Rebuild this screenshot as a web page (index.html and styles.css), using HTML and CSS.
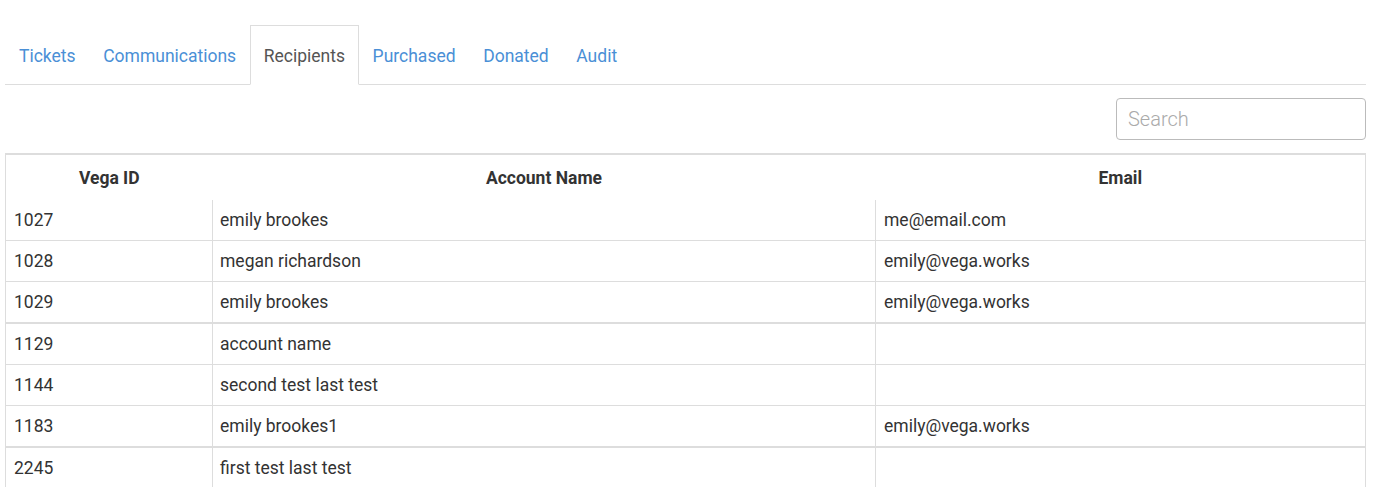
FILE: index.html
```html
<!DOCTYPE html>
<html>
<head>
<meta charset="utf-8">
<link rel="stylesheet" href="styles.css">
</head>
<body>
<div class="page">
  <ul class="tabs">
    <li class="tab"><a href="#">Tickets</a></li>
    <li class="tab"><a href="#">Communications</a></li>
    <li class="tab active"><a href="#">Recipients</a></li>
    <li class="tab"><a href="#">Purchased</a></li>
    <li class="tab"><a href="#">Donated</a></li>
    <li class="tab"><a href="#">Audit</a></li>
  </ul>
  <div class="toolbar">
    <input class="search" type="text" placeholder="Search">
  </div>
  <table class="grid">
    <colgroup>
      <col class="c-id"><col class="c-name"><col class="c-email">
    </colgroup>
    <thead>
      <tr><th>Vega ID</th><th>Account Name</th><th>Email</th></tr>
    </thead>
    <tbody>
      <tr><td>1027</td><td>emily brookes</td><td>me@email.com</td></tr>
      <tr><td>1028</td><td>megan richardson</td><td>emily@vega.works</td></tr>
      <tr><td>1029</td><td>emily brookes</td><td>emily@vega.works</td></tr>
    </tbody>
    <tbody>
      <tr><td>1129</td><td>account name</td><td></td></tr>
      <tr><td>1144</td><td>second test last test</td><td></td></tr>
      <tr><td>1183</td><td>emily brookes1</td><td>emily@vega.works</td></tr>
    </tbody>
    <tbody>
      <tr><td>2245</td><td>first test last test</td><td></td></tr>
    </tbody>
  </table>
</div>
</body>
</html>
```
FILE: styles.css
```css
html, body {
  margin: 0;
  padding: 0;
  background: #fff;
}
body {
  font-family: Roboto, "Liberation Sans", sans-serif;
  color: #333;
  font-size: 17.5px;
}
.page {
  padding: 25px 10px 0 5px;
}
.tabs {
  list-style: none;
  margin: 0;
  padding: 0;
  display: flex;
  border-bottom: 1px solid #ddd;
}
.tab {
  margin-bottom: -1px;
}
.tab a {
  display: block;
  padding: 18px 12.8px 16px 12.8px;
  line-height: 24px;
  font-size: 17.5px;
  color: #4a8fd6;
  text-decoration: none;
  border: 1px solid transparent;
}
.tab:first-child a {
  padding-left: 13px;
}
.tab.active a {
  color: #555;
  border-color: #ddd;
  border-bottom-color: #fff;
  background: #fff;
}
.toolbar {
  display: flex;
  justify-content: flex-end;
  padding: 13px 0 13px;
}
.search {
  width: 250px;
  height: 42px;
  box-sizing: border-box;
  border: 1px solid #bbb;
  border-radius: 4px;
  padding: 0 11px;
  font-family: Roboto, "Liberation Sans", sans-serif;
  font-size: 20px;
  font-weight: 300;
  color: #555;
  outline: none;
}
.search::placeholder {
  color: #aaa;
}
.grid {
  width: 100%;
  border-collapse: collapse;
  border: 1px solid #ddd;
  border-top: 2px solid #ddd;
}
.c-id { width: 207px; }
.c-name { width: 663px; }
.grid th {
  font-weight: 700;
  font-size: 17.5px;
  text-align: center;
  padding: 13px 8px 12px;
  height: 20px;
  line-height: 20px;
}
.grid td {
  padding: 9px 8px;
  line-height: 22px;
  height: 22px;
  border-top: 1px solid #ddd;
  border-left: 1px solid #ddd;
  text-align: left;
}
.grid td + td {
  padding-left: 7px;
}
.grid td:last-child {
  padding-left: 8px;
}
.grid tbody + tbody tr:first-child td {
  border-top: 2px solid #ddd;
}
.grid thead + tbody tr:first-child td {
  border-top: 0;
}
.grid td:first-child {
  border-left: 0;
}
```
